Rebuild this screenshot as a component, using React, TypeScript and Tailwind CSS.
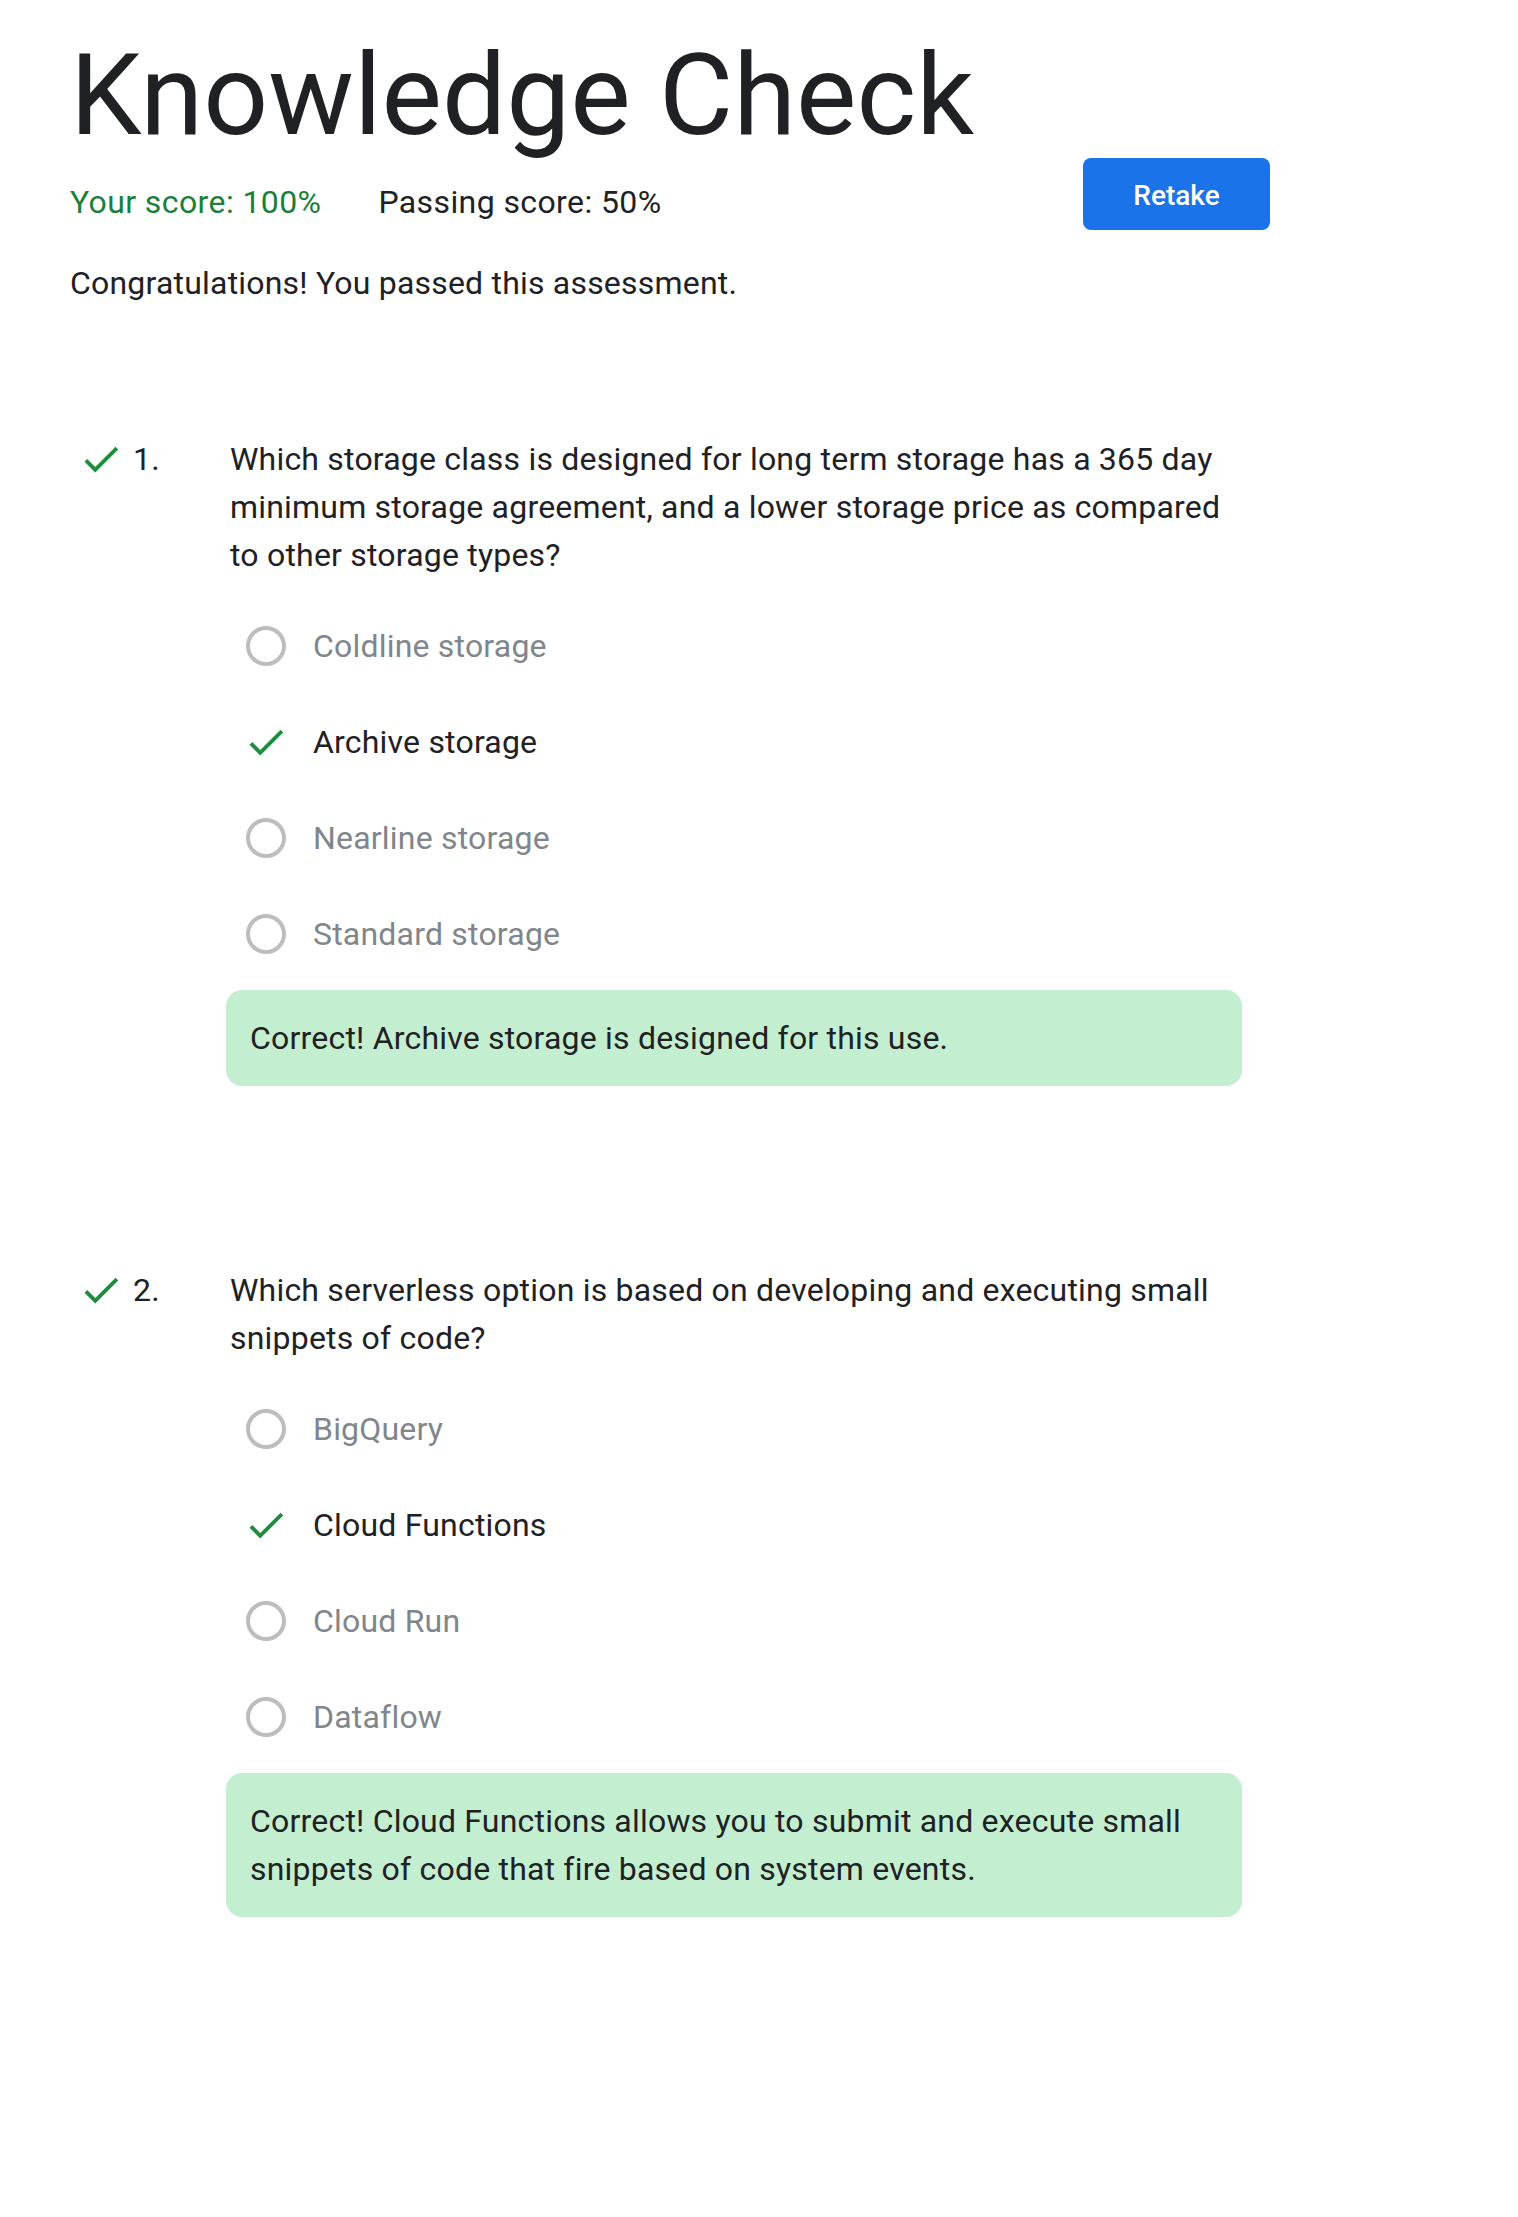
import React from 'react'

type Question = {
  number: number
  text: string
  options: string[]
  answer: number
  feedback: string
}

const questions: Question[] = [
  {
    number: 1,
    text: 'Which storage class is designed for long term storage has a 365 day minimum storage agreement, and a lower storage price as compared to other storage types?',
    options: ['Coldline storage', 'Archive storage', 'Nearline storage', 'Standard storage'],
    answer: 1,
    feedback: 'Correct! Archive storage is designed for this use.',
  },
  {
    number: 2,
    text: 'Which serverless option is based on developing and executing small snippets of code?',
    options: ['BigQuery', 'Cloud Functions', 'Cloud Run', 'Dataflow'],
    answer: 1,
    feedback: 'Correct! Cloud Functions allows you to submit and execute small snippets of code that fire based on system events.',
  },
]

function CheckIcon() {
  return (
    <svg viewBox="0 0 24 24" className="h-[46px] w-[46px] shrink-0 fill-[#1e8e3e]">
      <path d="M9 16.17L4.83 12l-1.42 1.41L9 19 21 7l-1.41-1.41z" />
    </svg>
  )
}

function QuestionBlock({ question }: { question: Question }) {
  return (
    <section className="flex">
      <div className="flex w-[160px] shrink-0 items-start">
        <span className="ml-[8px] flex h-[48px] items-center">
          <CheckIcon />
        </span>
        <span className="ml-[9px] text-[32px] leading-[48px] text-[#202124]">{question.number}.</span>
      </div>
      <div className="w-[1012px]">
        <p className="text-[32px] leading-[48px] text-[#202124]">{question.text}</p>
        <ul className="mt-[43px] flex flex-col gap-[48px] pl-4">
          {question.options.map((option, index) => {
            const correct = index === question.answer
            return (
              <li key={option} className="flex h-[48px] items-center gap-[27px]">
                <span className="flex w-[40px] shrink-0 justify-center">
                  {correct ? (
                    <CheckIcon />
                  ) : (
                    <span className="block h-[40px] w-[40px] rounded-full border-[4px] border-[#bdbdbd]" />
                  )}
                </span>
                <span className={`text-[32px] leading-[48px] ${correct ? 'text-[#202124]' : 'text-[#80868b]'}`}>
                  {option}
                </span>
              </li>
            )
          })}
        </ul>
        <div className="mt-[32px] -ml-[4px] w-[1016px] rounded-[16px] bg-[#c4eed0] px-[24px] py-[24px] text-[32px] leading-[48px] text-[#202124]">
          {question.feedback}
        </div>
      </div>
    </section>
  )
}

export default function App() {
  return (
    <div className="min-h-[2217px] bg-white font-['Roboto',sans-serif] tracking-[0.2px]">
      <main className="w-[1270px] pl-[70px] pt-[38px] pb-[200px]">
        <h1 className="text-[114px] leading-[114px] font-normal tracking-normal text-[#202124]">Knowledge Check</h1>
        <div className="mt-[6px] flex items-start">
          <div className="mt-[20px] flex flex-1 text-[32px] leading-[48px] tracking-[0.4px]">
            <span className="text-[#188038]">Your score: 100%</span>
            <span className="ml-[57px] text-[#202124]">Passing score: 50%</span>
          </div>
          <button
            type="button"
            className="h-[72px] w-[187px] rounded-lg bg-[#1a73e8] pt-[4px] text-[28px] font-medium tracking-normal text-white"
          >
            Retake
          </button>
        </div>
        <p className="mt-[29px] text-[32px] leading-[48px] text-[#202124]">
          Congratulations! You passed this assessment.
        </p>
        <div className="mt-[128px] flex flex-col gap-[180px]">
          {questions.map((question) => (
            <QuestionBlock key={question.number} question={question} />
          ))}
        </div>
      </main>
    </div>
  )
}
